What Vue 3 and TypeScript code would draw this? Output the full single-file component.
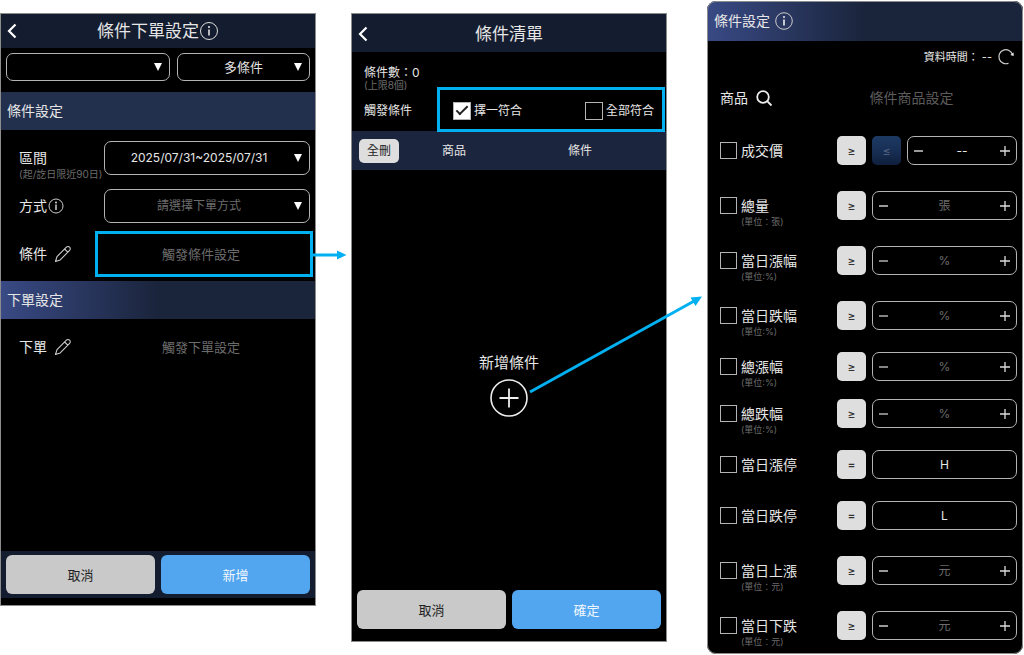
<script setup lang="ts">
import { ref } from 'vue'

interface Rule {
  id: string
  name: string
  unit?: string
  ops: string[]
  hint?: string
  value?: string
  stepper: boolean
  spacing?: 'near' | 'tight'
}

const rules: Rule[] = [
  { id: 'price', name: '成交價', ops: ['≥', '≤'], value: '--', stepper: true },
  { id: 'volume', name: '總量', unit: '(單位：張)', ops: ['≥'], hint: '張', stepper: true },
  { id: 'dayRise', name: '當日漲幅', unit: '(單位:%)', ops: ['≥'], hint: '%', stepper: true },
  { id: 'dayFall', name: '當日跌幅', unit: '(單位:%)', ops: ['≥'], hint: '%', stepper: true },
  { id: 'totalRise', name: '總漲幅', unit: '(單位:%)', ops: ['≥'], hint: '%', stepper: true, spacing: 'near' },
  { id: 'totalFall', name: '總跌幅', unit: '(單位:%)', ops: ['≥'], hint: '%', stepper: true, spacing: 'tight' },
  { id: 'limitUp', name: '當日漲停', ops: ['='], value: 'H', stepper: false, spacing: 'near' },
  { id: 'limitDown', name: '當日跌停', ops: ['='], value: 'L', stepper: false, spacing: 'near' },
  { id: 'up', name: '當日上漲', unit: '(單位：元)', ops: ['≥'], hint: '元', stepper: true },
  { id: 'down', name: '當日下跌', unit: '(單位：元)', ops: ['≥'], hint: '元', stepper: true },
]

const matchAny = ref(true)
const matchAll = ref(false)
</script>

<template>
  <main class="board">
    <section class="phone order">
      <header class="bar">
        <button class="icon-btn" type="button" aria-label="返回">
          <svg width="10" height="16" viewBox="0 0 10 16"><path d="M8.5 1.5 2 8l6.5 6.5" fill="none" stroke="#fff" stroke-width="2.2" /></svg>
        </button>
        <h1>
          條件下單設定
          <svg width="20" height="20" viewBox="0 0 20 20"><circle cx="10" cy="10" r="8.5" fill="none" stroke="#ddd" /><path d="M10 8.5v6" stroke="#eee" stroke-width="1.5" /><circle cx="10" cy="6" r="1" fill="#eee" /></svg>
        </h1>
      </header>

      <div class="filters">
        <span class="pick">
          <select aria-label="帳號"><option></option></select>
          <svg width="8" height="8" viewBox="0 0 8 8"><path d="M0 0h8L4 8z" fill="#fff" /></svg>
        </span>
        <span class="pick">
          <select aria-label="條件類型"><option>多條件</option></select>
          <svg width="8" height="8" viewBox="0 0 8 8"><path d="M0 0h8L4 8z" fill="#fff" /></svg>
        </span>
      </div>

      <h2 class="band flat">條件設定</h2>
      <div class="fields">
        <div class="field">
          <label class="caption" for="range"><span>區間</span><small>(起/訖日限近90日)</small></label>
          <span class="pick tall">
            <select id="range"><option>2025/07/31~2025/07/31</option></select>
            <svg width="8" height="8" viewBox="0 0 8 8"><path d="M0 0h8L4 8z" fill="#fff" /></svg>
          </span>
        </div>
        <div class="field">
          <label class="caption" for="mode">
            <span>方式<svg width="18" height="18" viewBox="0 0 18 18"><circle cx="9" cy="9" r="7" fill="none" stroke="#ccc" /><path d="M9 7.5V13" stroke="#eee" stroke-width="1.3" /><circle cx="9" cy="5.5" r="0.9" fill="#eee" /></svg></span>
          </label>
          <span class="pick tall dim">
            <select id="mode"><option>請選擇下單方式</option></select>
            <svg width="8" height="8" viewBox="0 0 8 8"><path d="M0 0h8L4 8z" fill="#fff" /></svg>
          </span>
        </div>
        <div class="field">
          <div class="caption">
            <span>條件<svg class="pencil" width="18" height="18" viewBox="0 0 18 18"><path d="M1.5 16.5 3 11.6 12.4 2.2a2.2 2.2 0 0 1 3.2 3.2L6.2 14.9zM10.6 4l3.2 3.2" fill="none" stroke="#ccc" stroke-width="1.1" stroke-linejoin="round" /></svg></span>
          </div>
          <button class="setter marked" type="button">觸發條件設定</button>
        </div>
      </div>

      <h2 class="band">下單設定</h2>
      <div class="fields">
        <div class="field">
          <div class="caption">
            <span>下單<svg class="pencil" width="18" height="18" viewBox="0 0 18 18"><path d="M1.5 16.5 3 11.6 12.4 2.2a2.2 2.2 0 0 1 3.2 3.2L6.2 14.9zM10.6 4l3.2 3.2" fill="none" stroke="#ccc" stroke-width="1.1" stroke-linejoin="round" /></svg></span>
          </div>
          <button class="setter" type="button">觸發下單設定</button>
        </div>
      </div>

      <footer class="actions tinted">
        <button class="cancel" type="button">取消</button>
        <button class="primary" type="button">新增</button>
      </footer>
    </section>

    <section class="phone list">
      <header class="bar">
        <button class="icon-btn" type="button" aria-label="返回">
          <svg width="10" height="16" viewBox="0 0 10 16"><path d="M8.5 1.5 2 8l6.5 6.5" fill="none" stroke="#fff" stroke-width="2.2" /></svg>
        </button>
        <h1>條件清單</h1>
      </header>

      <div class="count">
        <span>條件數：0</span>
        <small>(上限8個)</small>
      </div>
      <div class="match">
        <span>觸發條件</span>
        <div class="choices" role="group" aria-label="觸發條件">
          <label><input v-model="matchAny" class="tick" type="checkbox" />擇一符合</label>
          <label><input v-model="matchAll" class="tick" type="checkbox" />全部符合</label>
        </div>
      </div>
      <table class="heads">
        <thead>
          <tr>
            <th><button type="button">全刪</button></th>
            <th>商品</th>
            <th>條件</th>
          </tr>
        </thead>
      </table>

      <div class="empty">
        <button type="button">
          新增條件
          <svg width="38" height="38" viewBox="0 0 38 38" fill="none" stroke="#eee"><circle cx="19" cy="19" r="18" stroke-width="1.6" /><path d="M9.5 19h19M19 9.5v19" stroke-width="1.8" /></svg>
        </button>
      </div>

      <footer class="actions">
        <button class="cancel" type="button">取消</button>
        <button class="primary" type="button">確定</button>
      </footer>
    </section>

    <section class="phone setup">
      <h2 class="band">
        條件設定
        <svg width="20" height="20" viewBox="0 0 20 20"><circle cx="10" cy="10" r="8.3" fill="none" stroke="#ccc" /><path d="M10 8.5v6" stroke="#eee" stroke-width="1.6" /><circle cx="10" cy="6" r="1" fill="#eee" /></svg>
      </h2>
      <div class="time">
        <span>資料時間：&nbsp;--</span>
        <button class="icon-btn" type="button" aria-label="重新整理">
          <svg width="18" height="18" viewBox="0 0 18 18"><path d="M11.500 15.200A7 7 0 1 1 15.500 6.500" fill="none" stroke="#ccc" stroke-width="1.2" /><path d="M16.600 4.500v3.600l-3.200-1z" fill="#eee" /></svg>
        </button>
      </div>
      <div class="product">
        <span>商品</span>
        <button class="icon-btn" type="button" aria-label="搜尋商品">
          <svg width="18" height="18" viewBox="0 0 18 18" fill="none" stroke="#eee" stroke-width="1.8"><circle cx="8" cy="8" r="5.800" /><path d="m12.200 12.200 4.300 4.300" /></svg>
        </button>
        <button class="chooser" type="button">條件商品設定</button>
      </div>

      <div class="rules">
        <div v-for="rule in rules" :key="rule.id" class="rule" :class="rule.spacing">
          <input :id="rule.id" class="tick" type="checkbox" />
          <label class="caption" :for="rule.id"><span>{{ rule.name }}</span><small v-if="rule.unit">{{ rule.unit }}</small></label>
          <div class="controls">
            <button v-for="(op, i) in rule.ops" :key="op" class="op" :class="{ off: i > 0 }" type="button">{{ op }}</button>
            <div class="amount">
              <button v-if="rule.stepper" type="button" aria-label="減少">
                <svg width="12" height="12" viewBox="0 0 12 12"><path d="M1 6h9" stroke="#ccc" stroke-width="1.3" /></svg>
              </button>
              <input type="text" :value="rule.value" :placeholder="rule.hint" :aria-label="rule.name" />
              <button v-if="rule.stepper" type="button" aria-label="增加">
                <svg width="12" height="12" viewBox="0 0 12 12"><path d="M1 6h10M6 1v10" stroke="#ddd" stroke-width="1.3" /></svg>
              </button>
            </div>
          </div>
        </div>
      </div>
    </section>

    <svg class="arrows" viewBox="0 0 1024 655" preserveAspectRatio="none" fill="#00b0f0" stroke="none" aria-hidden="true">
      <path d="M312 255H340" stroke="#00b0f0" stroke-width="3" />
      <path d="M337 250.500 346.500 255 337 259.500z" />
      <path d="M530 392 696 300" stroke="#00b0f0" stroke-width="3" />
      <path d="M690.500 297.500 702 296.500 695.500 306z" />
    </svg>
  </main>
</template>

<style>
body {
  background: #fff;
}
</style>

<style scoped>
.board {
  position: relative;
  display: grid;
  grid-template-columns: minmax(0, 1fr) 35px minmax(0, 1fr) 40px minmax(0, 1fr);
  box-sizing: border-box;
  min-height: 100vh;
  padding-right: 1px;
  font-family: Inter, 'Noto Sans CJK TC', sans-serif;
  font-size: 14px;
  line-height: 20px;
  color: #e6e6e6;
}
.board *,
.board *::after {
  box-sizing: border-box;
}
button,
select,
input {
  margin: 0;
  padding: 0;
  font: inherit;
  color: inherit;
  background: none;
  border: 0;
}
svg {
  display: block;
  flex: none;
}
h1,
h2 {
  margin: 0;
  font-weight: 400;
}
small {
  font-size: 10px;
  line-height: 12px;
  color: #6c6c6c;
  white-space: nowrap;
}
.phone {
  display: flex;
  flex-direction: column;
  background: #000;
  outline: 1px solid #8c8c8c;
  outline-offset: -1px;
}
.order {
  grid-column: 1;
  margin: 13px 0 49px;
}
.list {
  grid-column: 3;
  margin: 13px 0;
}
.setup {
  grid-column: 5;
  margin: 1px 0;
  border-radius: 9px;
  overflow: hidden;
}

.bar {
  display: grid;
  grid-template-columns: 24px 1fr 24px;
  align-items: center;
  height: 35px;
  background: #141c2f;
}
.list .bar {
  height: 39px;
  padding-top: 2px;
}
.bar h1 {
  display: flex;
  align-items: center;
  justify-content: center;
  font-size: 17px;
  line-height: 24px;
}
.icon-btn {
  display: flex;
  justify-content: center;
}

.filters {
  display: grid;
  grid-template-columns: 164fr 133fr;
  gap: 7px;
  padding: 5px 6px 11px;
}
.pick {
  position: relative;
  display: block;
  height: 28px;
}
.pick select {
  width: 100%;
  height: 100%;
  appearance: none;
  border: 1px solid #b4b4b4;
  border-radius: 7px;
  font-size: 13px;
  text-align: center;
  text-align-last: center;
}
.pick svg {
  position: absolute;
  top: 50%;
  right: 8px;
  margin-top: -4px;
  pointer-events: none;
}
.pick.tall {
  height: 34px;
}
.pick.tall select {
  padding-right: 16px;
  font-size: 12px;
}
.pick.dim select {
  color: #6c6c6c;
}

.band {
  display: flex;
  align-items: center;
  gap: 4px;
  height: 38px;
  padding: 0 7px;
  font-size: 14px;
  line-height: 20px;
  background: linear-gradient(90deg, #394a85 0%, #1a243b 50%, #1a243b 100%);
}
.band.flat {
  background: #222f4d;
}

.fields {
  padding: 4px 6px 3px 0;
}
.field {
  display: grid;
  grid-template-columns: 104px minmax(0, 1fr);
  align-items: center;
  height: 48px;
}
.caption {
  display: flex;
  flex-direction: column;
}
.caption:has(small) {
  padding-top: 12px;
}
.caption span {
  display: flex;
  align-items: center;
}
.field .caption {
  padding-left: 19px;
}
.pencil {
  margin-left: 7px;
}
.setter {
  height: 46px;
  margin: 0 -3px 0 -9px;
  padding-right: 6px;
  font-size: 13px;
  color: #6c6c6c;
  border: 3px solid transparent;
}
.setter.marked {
  border-color: #00b0f0;
}

.actions {
  display: grid;
  grid-template-columns: 1fr 1fr;
  gap: 6px;
  margin-top: auto;
  padding: 4px 6px;
  margin-bottom: 8px;
}
.actions.tinted {
  background: #141c2f;
}
.list .actions {
  margin-bottom: 9px;
}
.actions button {
  height: 39px;
  border-radius: 6px;
  font-size: 13px;
}
.actions .cancel {
  background: #c9c9c9;
  color: #222;
}
.actions .primary {
  background: #52a5ef;
  color: #f2f8ff;
}

.count {
  display: flex;
  flex-direction: column;
  height: 35px;
  padding: 11px 13px 0;
  font-size: 12px;
}
.count small {
  line-height: 4px;
}
.match {
  display: grid;
  grid-template-columns: 73px minmax(0, 1fr);
  align-items: center;
  padding: 0 2px 0 13px;
  font-size: 12px;
}
.match > span {
  padding-top: 3px;
}
.choices {
  position: relative;
  display: flex;
  align-items: center;
  justify-content: space-between;
  height: 45px;
  padding: 2px 8px 0 13px;
  border: 3px solid #00b0f0;
}
.choices label {
  display: flex;
  align-items: center;
  gap: 3px;
  white-space: nowrap;
}
.tick {
  display: grid;
  place-items: center;
  flex: none;
  width: 18px;
  height: 18px;
  appearance: none;
  border: 1px solid #b4b4b4;
}
.tick:checked {
  background: #fff;
}
.tick:checked::after {
  content: '';
  width: 12px;
  height: 6px;
  margin-bottom: 4px;
  border: solid #222;
  border-width: 0 0 2px 2px;
  transform: rotate(-45deg);
}
.heads {
  width: 100%;
  height: 39px;
  margin-top: -1px;
  table-layout: fixed;
  border-collapse: collapse;
  background: #1b253d;
  font-size: 12px;
}
.heads th {
  padding: 0;
  font-weight: 400;
}
.heads th:first-child {
  width: 50px;
  padding-left: 8px;
  text-align: left;
}
.heads th:nth-child(2) {
  width: 106px;
}
.heads th:last-child {
  padding-right: 14px;
}
.heads button {
  width: 40px;
  height: 24px;
  border-radius: 5px;
  background: #dedede;
  color: #222;
}
.empty {
  display: flex;
  justify-content: center;
  padding-top: 183px;
}
.empty button {
  display: flex;
  flex-direction: column;
  align-items: center;
  gap: 6px;
  font-size: 15px;
}

.setup .band {
  height: 40px;
}
.time {
  display: flex;
  align-items: center;
  justify-content: flex-end;
  gap: 5px;
  height: 32px;
  padding-right: 8px;
  font-size: 11px;
}
.product {
  display: grid;
  grid-template-columns: 28px 32px minmax(0, 1fr);
  align-items: center;
  height: 50px;
  padding-left: 13px;
}
.chooser {
  margin-left: 20px;
  color: #5c5c5c;
}
.rules {
  display: flex;
  flex-direction: column;
  padding: 4px 0;
}
.rule {
  display: grid;
  grid-template-columns: 17px minmax(0, 1fr) 180px;
  align-items: center;
  gap: 4px;
  height: 47px;
  padding: 0 6px 0 13px;
}
.rule + .rule {
  margin-top: 8px;
}
.rule + .near {
  margin-top: 4px;
}
.rule + .tight {
  margin-top: 0;
}
.rule small {
  font-size: 9px;
}
.rule .tick {
  width: 17px;
  height: 17px;
}
.controls {
  display: flex;
  gap: 6px;
}
.op {
  flex: none;
  width: 29px;
  height: 29px;
  border-radius: 5px;
  background: #dedede;
  color: #333;
  font-size: 12px;
  font-weight: 500;
}
.op.off {
  background: linear-gradient(#1d3a63, #182f55 50%, #0f1f3c);
  color: #4d5f7d;
}
.amount {
  display: flex;
  align-items: center;
  flex: 1;
  min-width: 0;
  height: 29px;
  padding: 0 5px;
  border: 1px solid #b4b4b4;
  border-radius: 7px;
}
.amount input {
  flex: 1;
  width: 0;
  min-width: 0;
  height: 20px;
  outline: 0;
  text-align: center;
  font-size: 12px;
}
.amount input::placeholder {
  color: #6c6c6c;
  opacity: 1;
}
.amount button {
  display: flex;
  flex: none;
}

.arrows {
  position: absolute;
  inset: 0;
  width: 100%;
  height: 100%;
  pointer-events: none;
}
</style>
